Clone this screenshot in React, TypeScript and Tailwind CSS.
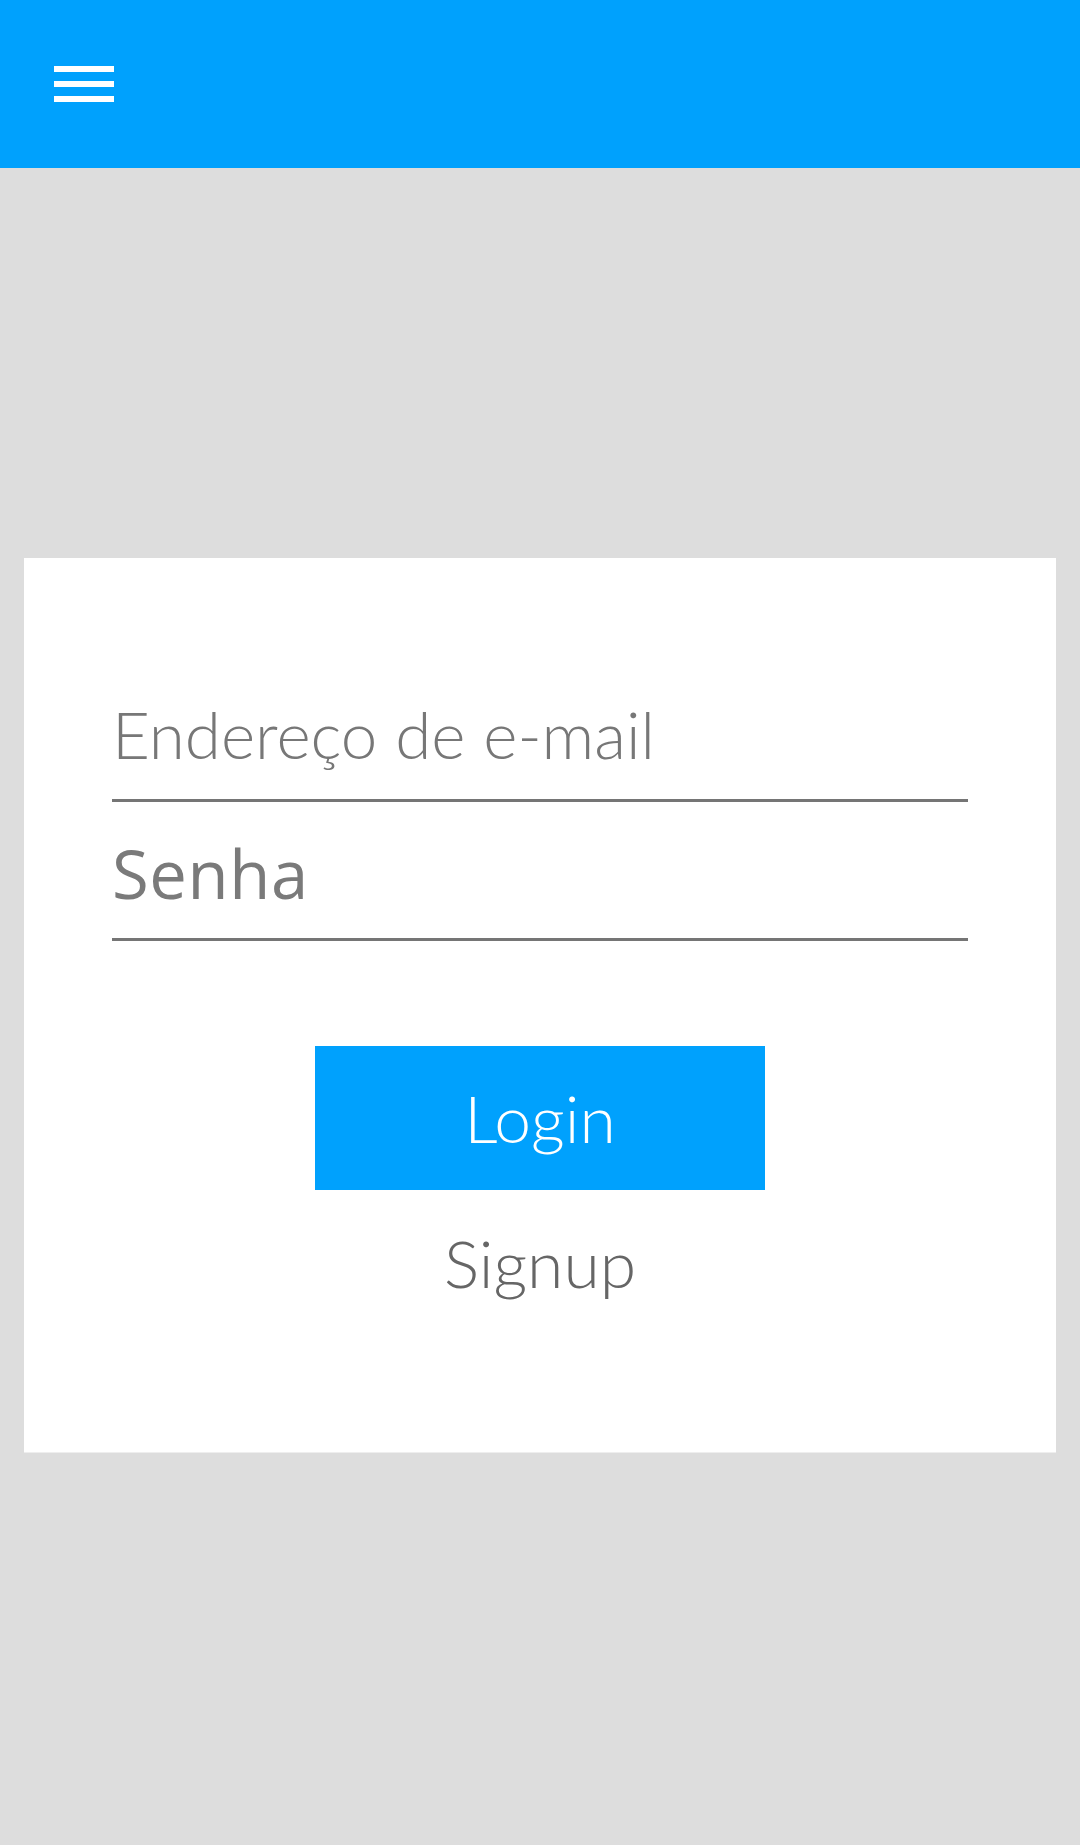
import React from "react";

export default function App() {
  return (
    <div className="w-[1080px] min-h-[1845px] bg-[#dddddd]">
      <header className="h-[168px] bg-[#00a1fd] pl-[54px] pt-[66px]">
        <div className="flex w-[60px] flex-col gap-[9px]">
          <div className="h-[6px] w-[60px] bg-white" />
          <div className="h-[6px] w-[60px] bg-white" />
          <div className="h-[6px] w-[60px] bg-white" />
        </div>
      </header>
      <main className="pt-[390px]">
        <div className="mx-[24px] h-[895px] border-b border-[#eeeeee] bg-white px-[88px] pt-[105px]">
          <div className="border-b-[3px] border-[#757575] pb-[32px] pt-[38px]">
            <div
              className="text-[65.5px] font-light leading-[66px] text-[#777777]"
              style={{ fontFamily: "Lato, sans-serif" }}
            >
              Endereço de e-mail
            </div>
          </div>
          <div className="border-b-[3px] border-[#757575] pb-[32px] pt-[38px]">
            <div
              className="text-[67px] font-normal leading-[66px] tracking-[0.6px] text-[#7a7a7a]"
              style={{ fontFamily: "'Open Sans', sans-serif" }}
            >
              Senha
            </div>
          </div>
          <div className="mt-[105px] flex flex-col items-center">
            <button
              className="flex h-[144px] w-[450px] items-center justify-center bg-[#00a1fd] text-[66px] font-light leading-[66px] text-white"
              style={{ fontFamily: "Lato, sans-serif" }}
            >
              Login
            </button>
            <div
              className="mt-[40px] text-[66px] font-light leading-[66px] text-[#666666]"
              style={{ fontFamily: "Lato, sans-serif" }}
            >
              Signup
            </div>
          </div>
        </div>
      </main>
    </div>
  );
}
